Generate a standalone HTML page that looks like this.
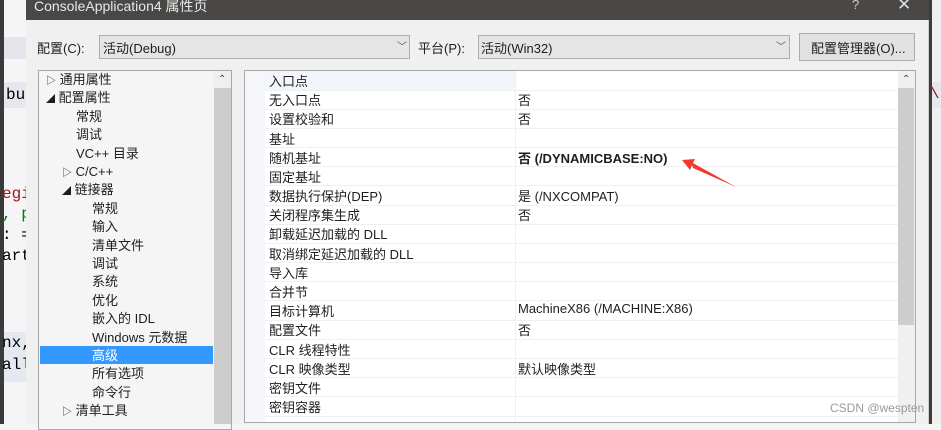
<!DOCTYPE html>
<html><head><meta charset="utf-8"><style>
*{margin:0;padding:0;box-sizing:border-box}
body{width:941px;height:424px;overflow:hidden;background:#f5f5f5;font-family:"Liberation Sans","Noto Sans CJK SC",sans-serif;font-size:13px;color:#1e1e1e;position:relative}
.a{position:absolute}
.code{font-family:"Liberation Mono",monospace;font-size:16px;position:absolute;left:2px;white-space:nowrap}
.t{position:absolute;white-space:nowrap}
</style></head><body>
<div class="a" style="left:0;top:0;width:26px;height:424px;background:#f5f5f7"></div>
<div class="a" style="left:0;top:0;width:4px;height:424px;background:#3a3a3a"></div>
<div class="a" style="left:4px;top:37px;width:22px;height:22px;background:#e4e4ea"></div>
<div class="a" style="left:4px;top:82px;width:22px;height:26px;background:#e6e8ee"></div>
<div class="a" style="left:4px;top:332px;width:22px;height:50px;background:#e4e8f0"></div>
<div class="code" style="top:86px;color:#000;left:6px">bu</div>
<div class="code" style="top:185px;color:#a31515">egi</div>
<div class="code" style="top:205px;color:#008000">, p</div>
<div class="code" style="top:226px;color:#000">: =</div>
<div class="code" style="top:247px;color:#000">art</div>
<div class="code" style="top:334px;color:#000">nx,</div>
<div class="code" style="top:356px;color:#000">all</div>
<div class="a" style="left:926px;top:0;width:15px;height:424px;background:#f0f0f0"></div>
<div class="a" style="left:929px;top:0;width:3px;height:424px;background:#3c3c3c"></div>
<div class="a" style="left:932px;top:82px;width:9px;height:26px;background:#e6e8ee"></div>
<div class="t" style="left:930px;top:85px;color:#a31515;font-size:16px;font-family:'Liberation Mono',monospace">\</div>
<div class="a" style="left:26px;top:0;width:903px;height:424px;background:#f0f0f0;border-right:1px solid #cfcfcf"></div>
<div class="a" style="left:26px;top:0;width:903px;height:20px;background:#4a4846"></div>
<div class="t" style="left:34px;top:-4px;color:#e8e8e8;font-size:14px">ConsoleApplication4 属性页</div>
<div class="t" style="left:852px;top:-3px;color:#ccc;font-size:13px">?</div>
<div class="t" style="left:897px;top:-5px;color:#ddd;font-size:17px">✕</div>
<div class="t" style="left:37px;top:38px;font-size:13px">配置(C):</div>
<div class="a" style="left:99px;top:35px;width:311px;height:24px;background:#e5e5e5;border:1px solid #adadad"></div>
<div class="t" style="left:103px;top:38px;font-size:13px">活动(Debug)</div>
<div class="t" style="left:397px;top:38px;font-size:10px;color:#555">﹀</div>
<div class="t" style="left:418px;top:38px;font-size:13px">平台(P):</div>
<div class="a" style="left:478px;top:35px;width:312px;height:24px;background:#e5e5e5;border:1px solid #adadad"></div>
<div class="t" style="left:481px;top:38px;font-size:13px">活动(Win32)</div>
<div class="t" style="left:776px;top:38px;font-size:10px;color:#555">﹀</div>
<div class="a" style="left:799px;top:33px;width:116px;height:28px;background:#e1e1e1;border:1px solid #adadad"></div>
<div class="t" style="left:811px;top:38px;font-size:13px">配置管理器(O)...</div>
<div class="a" style="left:38px;top:70px;width:194px;height:360px;background:#f5f5f5;border:1px solid #a8a8a8"></div>
<div class="a" style="left:214px;top:71px;width:17px;height:353px;background:#efefef"></div>
<div class="a" style="left:214px;top:88px;width:17px;height:336px;background:#cdcdcd"></div>
<div class="t" style="left:218px;top:74px;font-size:10px;color:#444">⌃</div>
<div class="a" style="left:40px;top:346px;width:173px;height:18px;background:#3399ff"></div>
<div style="position:absolute;left:0;top:71px;line-height:18.4px">
<div class="t" style="left:46px;top:0"><span style="font-size:10px">▷</span> 通用属性</div>
<div class="t" style="left:46px;top:18.4px"><span style="font-size:9px">◢</span> 配置属性</div>
<div class="t" style="left:76px;top:36.8px">常规</div>
<div class="t" style="left:76px;top:55.2px">调试</div>
<div class="t" style="left:76px;top:73.6px">VC++ 目录</div>
<div class="t" style="left:62px;top:92px"><span style="font-size:10px">▷</span> C/C++</div>
<div class="t" style="left:62px;top:110.4px"><span style="font-size:9px">◢</span> 链接器</div>
<div class="t" style="left:92px;top:128.8px">常规</div>
<div class="t" style="left:92px;top:147.2px">输入</div>
<div class="t" style="left:92px;top:165.6px">清单文件</div>
<div class="t" style="left:92px;top:184px">调试</div>
<div class="t" style="left:92px;top:202.4px">系统</div>
<div class="t" style="left:92px;top:220.8px">优化</div>
<div class="t" style="left:92px;top:239.2px">嵌入的 IDL</div>
<div class="t" style="left:92px;top:257.6px">Windows 元数据</div>
<div class="t" style="left:92px;top:276px;color:#fff">高级</div>
<div class="t" style="left:92px;top:294.4px">所有选项</div>
<div class="t" style="left:92px;top:312.8px">命令行</div>
<div class="t" style="left:62px;top:331.2px"><span style="font-size:10px">▷</span> 清单工具</div>
</div>
<div class="a" style="left:244px;top:70px;width:672px;height:353px;background:#fff;border:1px solid #a8a8a8"></div>
<div class="a" style="left:245px;top:71px;width:20px;height:351px;background:#f4f6fa"></div>
<div class="a" style="left:265px;top:71px;width:250px;height:19px;background:#f2f6fb"></div>
<div class="a" style="left:898px;top:71px;width:17px;height:351px;background:#f0f0f0"></div>
<div class="a" style="left:898px;top:88px;width:16px;height:237px;background:#cdcdcd"></div>
<div class="t" style="left:902px;top:74px;font-size:10px;color:#444">⌃</div>
<div class="a" style="left:515px;top:71px;width:1px;height:351px;background:#f0f0f0"></div>
<div id="g" style="position:absolute;left:0;top:70px"></div>
<script>
var rows=[["入口点",""],["无入口点","否"],["设置校验和","否"],["基址",""],["随机基址","<b>否 (/DYNAMICBASE:NO)</b>"],["固定基址",""],["数据执行保护(DEP)","是 (/NXCOMPAT)"],["关闭程序集生成","否"],["卸载延迟加载的 DLL",""],["取消绑定延迟加载的 DLL",""],["导入库",""],["合并节",""],["目标计算机","MachineX86 (/MACHINE:X86)"],["配置文件","否"],["CLR 线程特性",""],["CLR 映像类型","默认映像类型"],["密钥文件",""],["密钥容器",""]];
var h="";for(var i=0;i<rows.length;i++){var y=i*19.18;
h+='<div class="t" style="left:269px;top:'+(y+1)+'px">'+rows[i][0]+'</div><div class="t" style="left:518px;top:'+(y+1)+'px">'+rows[i][1]+'</div><div class="a" style="left:265px;top:'+(y+19.5)+'px;width:633px;height:1px;background:#eef0f4"></div>';}
document.getElementById("g").innerHTML=h;
</script>
<svg class="a" style="left:670px;top:150px" width="80" height="45"><path d="M66 37 L22 15 L25 9 L12 10 L20 20 L22 15 Z" fill="#f03a2e"/><path d="M66 37 L21 12 L23 18 Z" fill="#f03a2e"/></svg>
<div class="t" style="left:830px;top:401px;color:#9a9a9a;font-size:12px">CSDN @wespten</div>
</body></html>
